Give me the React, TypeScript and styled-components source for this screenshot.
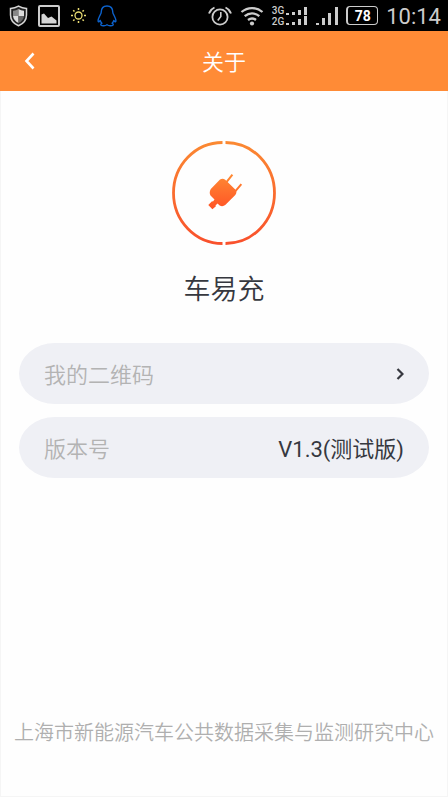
import React from "react";
import styled, { createGlobalStyle } from "styled-components";

const GlobalStyle = createGlobalStyle`
  * { box-sizing: border-box; }
  body {
    margin: 0;
    background: #fff;
    font-family: Roboto, "Noto Sans CJK SC", sans-serif;
  }
`;

const Screen = styled.div`
  min-height: 100vh;
  display: flex;
  flex-direction: column;
  background: #fefefe;
`;

const StatusBar = styled.div`
  height: 31px;
  padding: 0 7px 0 9px;
  display: flex;
  align-items: center;
  justify-content: space-between;
  background: #000;
  color: #ccc;
`;

const StatusGroup = styled.div<{ $gap: number }>`
  display: flex;
  align-items: center;
  gap: ${(p) => p.$gap}px;
  svg { display: block; flex: none; }
`;

const Networks = styled.div`
  display: flex;
  align-items: center;
  gap: 2px;
`;

const NetworkNames = styled.div`
  display: flex;
  flex-direction: column;
  font-size: 10px;
  line-height: 11px;
  font-weight: 500;
`;

const Battery = styled.div`
  width: 32px;
  height: 19px;
  display: flex;
  align-items: center;
  justify-content: center;
  border: 1px solid #ccc;
  border-left-width: 2px;
  border-radius: 4px;
  color: #fff;
  font-size: 14px;
  line-height: 16px;
  font-weight: 700;
`;

const Clock = styled.time`
  font-size: 22px;
  line-height: 30px;
  padding-top: 2px;
`;

const Header = styled.header`
  height: 60px;
  padding: 0 20px;
  display: grid;
  grid-template-columns: 40px 1fr 40px;
  align-items: center;
  background: #ff8b36;
  color: #fff;
`;

const BackButton = styled.button`
  height: 40px;
  padding: 0;
  border: 0;
  display: flex;
  align-items: center;
  background: none;
  color: inherit;
  cursor: pointer;
`;

const Title = styled.h1`
  margin: 0;
  padding-top: 4px;
  text-align: center;
  font-size: 22px;
  line-height: 32px;
  font-weight: 350;
`;

const Content = styled.main`
  flex: 1;
  display: flex;
  flex-direction: column;
  border: 1px solid #f5f5f5;
  border-top: 0;
`;

const Brand = styled.section`
  padding-top: 50px;
  display: flex;
  flex-direction: column;
  align-items: center;
`;

const AppName = styled.h2`
  margin: 25px 0 0;
  font-size: 27px;
  line-height: 40px;
  font-weight: 350;
  color: #36383f;
`;

const List = styled.div`
  padding: 33px 18px 0;
  display: flex;
  flex-direction: column;
  gap: 13px;
`;

const Row = styled.div`
  width: 100%;
  height: 61px;
  padding: 0 25px;
  border: 0;
  border-radius: 36px / 50%;
  display: flex;
  align-items: center;
  justify-content: space-between;
  background: #eff0f5;
  font-family: inherit;
  font-size: 22px;
  line-height: 32px;
  text-align: left;
`;

const Label = styled.span`
  padding-top: 4px;
  font-weight: 350;
  color: #b3b3b3;
`;

const Value = styled.span`
  padding-top: 4px;
  font-weight: 400;
  color: #36383f;
`;

const Footer = styled.footer`
  margin-top: auto;
  padding-bottom: 47px;
  text-align: center;
  font-size: 20px;
  line-height: 32px;
  font-weight: 350;
  color: #afafaf;
  white-space: nowrap;
`;

const ShieldIcon = () => (
  <svg width="19" height="22" viewBox="0 0 19 22" aria-hidden="true">
    <path d="M9.500 1.200C7 2.700 4.200 3.400 1.500 3.400V10c0 5 3.300 8.800 8 10.800 4.700-2 8-5.800 8-10.800V3.400c-2.700 0-5.500-.7-8-2.200Z" fill="#222" stroke="#d6d6d6" strokeWidth="1.500" />
    <path d="M9.500 4C7.800 5 6 5.600 4 5.800V11h5.500Z" fill="#888" />
    <path d="M9.500 4c1.700 1 3.500 1.600 5.500 1.800V11H9.500Z" fill="#ddd" />
    <path d="M4 11h5.500v7C6.300 16.500 4.300 14 4 11Z" fill="#ddd" />
    <path d="M15 11H9.500v7c3.200-1.500 5.200-4 5.500-7Z" fill="#666" />
  </svg>
);

const PictureIcon = () => (
  <svg width="22" height="22" viewBox="0 0 22 22" aria-hidden="true">
    <rect x="1" y="1" width="20" height="20" rx="1" fill="none" stroke="#ccc" strokeWidth="2" />
    <path d="M3.500 18.500V9.500l2.500-1L10 13l3.500-1.500 5 4v3Z" fill="#d4d4d4" />
  </svg>
);

const SunIcon = () => (
  <svg width="17" height="17" viewBox="0 0 17 17" fill="none" stroke="#e9dc72" aria-hidden="true">
    <circle cx="8.500" cy="8.500" r="3.500" strokeWidth="1.300" />
    <path d="M8.500 1v2M8.500 14v2M1 8.500h2M14 8.500h2M3.200 3.200l1.300 1.300M12.500 12.500l1.300 1.300M3.200 13.800l1.300-1.300M12.500 4.500l1.300-1.300" strokeWidth="1.500" />
  </svg>
);

const PenguinIcon = () => (
  <svg width="20" height="22" viewBox="0 0 20 22" aria-hidden="true">
    <path d="M10 1C6.200 1 4.200 3.800 4.200 7.300c0 1-.4 1.400-.8 2.200-.8 2-2.300 3.900-2.300 6.300 0 1 .5 1.400 1.100.8l1-1.200c.3 1.300.8 2 1.700 2.900-1 .4-1.500 1.200-.8 1.900 1 .9 4.200.8 5.900-.5 1.700 1.300 4.900 1.400 5.900.5.700-.7.200-1.500-.8-1.900.9-.9 1.400-1.600 1.700-2.900l1 1.200c.6.600 1.100.2 1.100-.8 0-2.400-1.500-4.300-2.300-6.300-.4-.8-.8-1.200-.8-2.200C15.800 3.800 13.800 1 10 1Z" fill="none" stroke="#0c62cc" strokeWidth="1.400" strokeLinejoin="round" />
  </svg>
);

const AlarmIcon = () => (
  <svg width="24" height="20" viewBox="0 0 24 20" fill="none" stroke="#ccc" aria-hidden="true">
    <circle cx="12" cy="11" r="7.600" strokeWidth="1.800" />
    <path d="M12.800 6v4.500L9.800 14.500" strokeWidth="1.600" />
    <path d="M1 7.500C2 4.700 3.800 2.700 6.500 1.500M23 7.500c-1-2.800-2.800-4.800-5.500-6" strokeWidth="1.900" />
  </svg>
);

const WifiIcon = () => (
  <svg width="24" height="20" viewBox="0 0 24 20" fill="none" stroke="#ccc" aria-hidden="true">
    <path d="M1.500 6c6.200-5.300 14.800-5.300 21 0M4.700 10.200c4.400-3.700 10.200-3.700 14.600 0M8 14c2.500-1.900 5.500-1.900 8 0" strokeWidth="2.300" />
    <circle cx="12" cy="17.500" r="2.100" fill="#ccc" stroke="none" />
  </svg>
);

const DualSignalIcon = () => (
  <svg width="22" height="20" viewBox="0 0 22 20" fill="#ccc" aria-hidden="true">
    <path d="M0 7h3v2H0ZM6 6h3v3H6ZM12 4h3v5h-3ZM18 1h3v8h-3ZM0 17h3v2H0ZM6 16h3v3H6ZM12 13h3v6h-3ZM18 10h3v9h-3Z" />
  </svg>
);

const SignalIcon = () => (
  <svg width="22" height="20" viewBox="0 0 22 20" fill="#ccc" aria-hidden="true">
    <path d="M0 17h3v2H0ZM6 12h3v7H6ZM12 7h3v12h-3ZM19 1h3v18h-3Z" />
  </svg>
);

const BackIcon = () => (
  <svg width="20" height="20" viewBox="0 0 20 20" aria-hidden="true">
    <path d="M13.500 2.500 6.500 10l7 7.500" fill="none" stroke="#fff" strokeWidth="2.600" />
  </svg>
);

const ForwardIcon = () => (
  <svg width="9" height="14" viewBox="0 0 9 14" aria-hidden="true">
    <path d="m2.500 2 5 5-5 5" fill="none" stroke="#36383f" strokeWidth="2.200" />
  </svg>
);

const PlugLogo = () => (
  <svg width="104" height="104" viewBox="0 0 104 104" role="img" aria-label="车易充">
    <defs>
      <linearGradient id="ring" gradientUnits="userSpaceOnUse" x1="0" y1="0" x2="0" y2="104">
        <stop offset="0" stopColor="#fb8932" />
        <stop offset="1" stopColor="#f9502c" />
      </linearGradient>
      <linearGradient id="plug" gradientUnits="userSpaceOnUse" x1="0" y1="34" x2="0" y2="68">
        <stop offset="0" stopColor="#ff8933" />
        <stop offset="1" stopColor="#ff5426" />
      </linearGradient>
    </defs>
    <path d="M50.500 1.500A49 50.500 0 0 0 50.500 102.500M53.500 1.500A49 50.500 0 0 1 53.500 102.500" fill="none" stroke="url(#ring)" strokeWidth="2.800" />
    <g fill="url(#plug)">
      <path d="M48 38.600q2.800-1.800 5.200.2L63.300 48.500q2.200 2.600 0 5.600L53.500 63.800q-3 2.400-5.800.6L45.500 62.500 43.500 64.500l.4.700-3.500 3L36.300 64l3.700-3.700 1 .2 1.500-2L38.500 54.500q-1.700-3 .3-6.500Z" />
      <path d="m53.300 41 6.300-8 1.600 1.200-6.300 8ZM62.300 50l6.300-7.500 1.500 1.200-6.300 7.500Z" />
    </g>
  </svg>
);

export default function App() {
  return (
    <>
      <GlobalStyle />
      <Screen>
        <StatusBar>
          <StatusGroup $gap={10}>
            <ShieldIcon />
            <PictureIcon />
            <SunIcon />
            <PenguinIcon />
          </StatusGroup>
          <StatusGroup $gap={8}>
            <AlarmIcon />
            <WifiIcon />
            <Networks>
              <NetworkNames>
                <span>3G</span>
                <span>2G</span>
              </NetworkNames>
              <DualSignalIcon />
            </Networks>
            <SignalIcon />
            <Battery>78</Battery>
            <Clock>10:14</Clock>
          </StatusGroup>
        </StatusBar>
        <Header>
          <BackButton type="button" aria-label="返回">
            <BackIcon />
          </BackButton>
          <Title>关于</Title>
        </Header>
        <Content>
          <Brand>
            <PlugLogo />
            <AppName>车易充</AppName>
          </Brand>
          <List>
            <Row as="button">
              <Label>我的二维码</Label>
              <ForwardIcon />
            </Row>
            <Row>
              <Label>版本号</Label>
              <Value>V1.3(测试版)</Value>
            </Row>
          </List>
          <Footer>上海市新能源汽车公共数据采集与监测研究中心</Footer>
        </Content>
      </Screen>
    </>
  );
}
